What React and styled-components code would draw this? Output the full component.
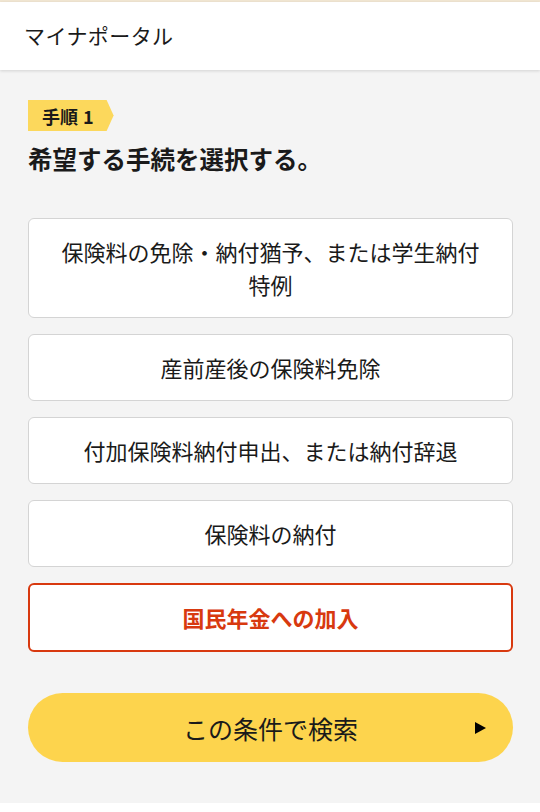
import React from 'react';
import styled, { createGlobalStyle } from 'styled-components';

const GlobalStyle = createGlobalStyle`
  html, body {
    margin: 0;
    padding: 0;
    background: #f4f4f4;
  }
  body {
    font-family: "Noto Sans CJK JP", "Noto Sans", sans-serif;
    color: #1a1a1a;
  }
  * { box-sizing: border-box; }
`;

const Page = styled.div`
  width: 540px;
  min-height: 812px;
  display: flex;
  flex-direction: column;
  background: #f4f4f4;
  border-top: 2px solid #f1e6d2;
`;

const Header = styled.header`
  height: 68px;
  background: #fff;
  display: flex;
  align-items: center;
  padding: 0 24px;
  box-shadow: 0 1px 3px rgba(0, 0, 0, 0.14);
  position: relative;
  z-index: 1;
`;

const Logo = styled.div`
  font-size: 21px;
  letter-spacing: 0.02em;
  color: #1a1a1a;
  margin-top: -2px;
`;

const Main = styled.main`
  flex: 1;
  padding: 30px 27px 41px 28px;
  display: flex;
  flex-direction: column;
`;

const StepBadge = styled.div`
  align-self: flex-start;
  height: 31px;
  padding: 0 20px 0 14px;
  display: flex;
  align-items: center;
  gap: 5px;
  background: #fcd85c;
  clip-path: polygon(0 0, calc(100% - 7px) 0, 100% 50%, calc(100% - 7px) 100%, 0 100%);
  font-size: 18px;
  font-weight: 700;
  color: #1a1a1a;
`;

const Heading = styled.h1`
  margin: 10px 0 0;
  font-size: 24.5px;
  font-weight: 700;
  line-height: 36px;
  color: #1a1a1a;
`;

const Options = styled.div`
  margin-top: 41px;
  display: flex;
  flex-direction: column;
  gap: 16px;
`;

const Option = styled.button`
  width: 100%;
  background: #fff;
  border: ${p => (p.$selected ? '2px solid #d8390f' : '1px solid #d4d4d4')};
  border-radius: 6px;
  padding: 16px 16px;
  font-family: inherit;
  font-size: 22px;
  line-height: 33px;
  font-weight: ${p => (p.$selected ? 700 : 400)};
  color: ${p => (p.$selected ? '#d8390f' : '#1a1a1a')};
  text-align: center;
  white-space: nowrap;
  cursor: pointer;
`;

const SearchButton = styled.button`
  margin-top: 41px;
  height: 69px;
  width: 100%;
  border: none;
  border-radius: 35px;
  background: #fdd44d;
  position: relative;
  display: flex;
  align-items: center;
  justify-content: center;
  font-family: inherit;
  font-size: 25px;
  color: #1a1a1a;
  cursor: pointer;
`;

const Arrow = styled.span`
  position: absolute;
  right: 27px;
  top: 50%;
  transform: translateY(-50%);
  width: 0;
  height: 0;
  border-top: 6px solid transparent;
  border-bottom: 6px solid transparent;
  border-left: 11px solid #000;
`;

const Footer = styled.footer`
  height: 9px;
  background: #fff;
`;

const procedures = [
  '保険料の免除・納付猶予、または学生納付特例',
  '産前産後の保険料免除',
  '付加保険料納付申出、または納付辞退',
  '保険料の納付',
  '国民年金への加入',
];

export default function App() {
  const selected = 4;
  return (
    <>
      <GlobalStyle />
      <Page>
        <Header>
          <Logo>マイナポータル</Logo>
        </Header>
        <Main>
          <StepBadge>
            <span>手順</span>
            <span>1</span>
          </StepBadge>
          <Heading>希望する手続を選択する。</Heading>
          <Options>
            {procedures.map((label, i) => (
              <Option key={label} $selected={i === selected}>
                {i === 0 ? (
                  <>保険料の免除・納付猶予、または学生納付<br />特例</>
                ) : (
                  label
                )}
              </Option>
            ))}
          </Options>
          <SearchButton>
            この条件で検索
            <Arrow />
          </SearchButton>
        </Main>
        <Footer />
      </Page>
    </>
  );
}
